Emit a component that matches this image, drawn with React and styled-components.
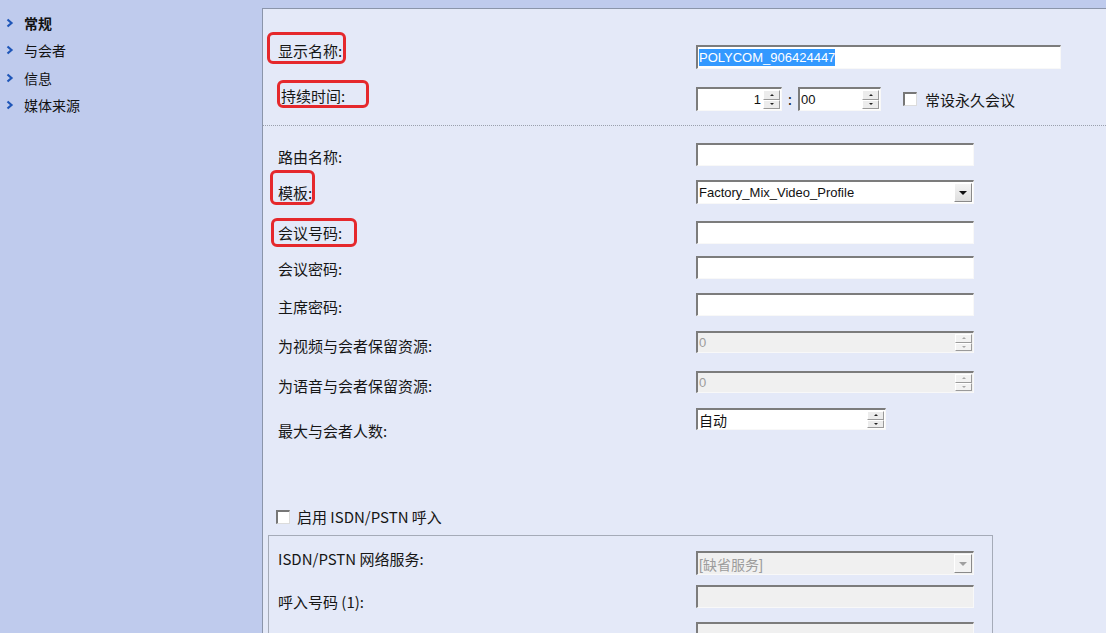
import React from 'react';
import styled, { createGlobalStyle } from 'styled-components';

const GlobalStyle = createGlobalStyle`
  html, body {
    margin: 0;
    padding: 0;
  }
  body {
    background: #bfcbed;
    font-family: "Noto Sans CJK SC", "Liberation Sans", sans-serif;
    color: #161616;
    overflow: hidden;
  }
`;

const Page = styled.div`
  display: flex;
  width: 1106px;
  height: 633px;
  overflow: hidden;
`;

const Sidebar = styled.ul`
  width: 262px;
  flex-shrink: 0;
  margin: 0;
  padding: 9px 0 0 0;
  list-style: none;
`;

const NavItem = styled.li`
  display: flex;
  align-items: center;
  height: 27.5px;
  padding-left: 6px;
  font-size: 14px;
  font-weight: ${p => (p.$active ? 700 : 400)};
  color: #111;
`;

const Chevron = styled.svg`
  width: 8px;
  height: 10px;
  margin-right: 10px;
  flex-shrink: 0;
`;

const Panel = styled.main`
  flex: 1;
  margin-top: 8px;
  background: #e4e9f8;
  border-left: 1px solid #8b95aa;
  border-top: 1px solid #8b95aa;
  display: flex;
  flex-direction: column;
  overflow: hidden;
`;

const TopSection = styled.section`
  display: flex;
  flex-direction: column;
  gap: 18px;
  padding: 36px 0 14px 15px;
  border-bottom: 1px dotted #9aa0ad;
`;

const Form = styled.section`
  display: flex;
  flex-direction: column;
  padding: 17px 0 0 15px;
`;

const Row = styled.div`
  display: grid;
  grid-template-columns: 418px auto;
  align-items: start;
  height: ${p => p.$h || 24}px;
`;

const Label = styled.div`
  font-size: 15px;
  line-height: 24px;
  white-space: nowrap;
  margin-top: ${p => p.$dy || 0}px;
  padding-left: ${p => p.$dx || 0}px;
`;

const Marked = styled.span`
  position: relative;
  display: inline-block;

  &::before {
    content: '';
    position: absolute;
    left: ${p => p.$box[0]}px;
    top: ${p => p.$box[1]}px;
    right: ${p => p.$box[2]}px;
    bottom: ${p => p.$box[3]}px;
    border: 3px solid #e5282c;
    border-radius: 6px;
  }
`;

const Controls = styled.div`
  display: flex;
  align-items: center;
`;

const Field = styled.div`
  box-sizing: border-box;
  display: flex;
  align-items: stretch;
  width: ${p => p.$w}px;
  height: ${p => p.$h || 23}px;
  background: ${p => (p.$disabled ? '#f0f0f0' : '#fff')};
  border-top: 2px solid #7c7c7c;
  border-left: 2px solid #7c7c7c;
  border-right: 1px solid #f8f8f8;
  border-bottom: 1px solid #f8f8f8;
  font-family: "Liberation Sans", "Noto Sans CJK SC", sans-serif;
  font-size: 13px;
  color: ${p => (p.$disabled ? '#9c9c9c' : '#111')};
`;

const FieldText = styled.span`
  flex: 1;
  display: flex;
  align-items: center;
  justify-content: ${p => (p.$right ? 'flex-end' : 'flex-start')};
  padding: 0 2px 0 1px;
  white-space: nowrap;
  overflow: hidden;
  font-size: ${p => (p.$cjk ? 14 : 13)}px;
`;

const Selected = styled.span`
  background: #3399ff;
  color: #fff;
  padding: 1px 0;
`;

const SpinBox = styled.div`
  display: flex;
  flex-direction: column;
  width: 17px;
  padding: 1px 1px 1px 0;
`;

const SpinButton = styled.div`
  flex: 1;
  display: flex;
  align-items: center;
  justify-content: center;
  background: ${p => (p.$disabled ? '#f2f2f2' : '#ececec')};
  border-top: 1px solid #fff;
  border-left: 1px solid #fff;
  border-right: 1px solid #9a9a9a;
  border-bottom: 1px solid #9a9a9a;

  &::after {
    content: '';
    border-left: 2px solid transparent;
    border-right: 2px solid transparent;
    ${p => (p.$up ? 'border-bottom' : 'border-top')}: 2px solid ${p => (p.$disabled ? '#a8a8a8' : '#222')};
  }
`;

const DropButton = styled.div`
  box-sizing: border-box;
  width: 18px;
  margin: 1px 1px 1px 0;
  display: flex;
  align-items: center;
  justify-content: center;
  background: ${p => (p.$disabled ? '#f2f2f2' : 'linear-gradient(#f4f4f4, #dedede)')};
  border-top: 1px solid #fff;
  border-left: 1px solid #fff;
  border-right: 1px solid #8a8a8a;
  border-bottom: 1px solid #8a8a8a;

  &::after {
    content: '';
    border-left: 4px solid transparent;
    border-right: 4px solid transparent;
    border-top: 4px solid ${p => (p.$disabled ? '#a0a0a0' : '#111')};
  }
`;

const Colon = styled.span`
  width: 16px;
  text-align: center;
  font-size: 14px;
`;

const Check = styled.span`
  box-sizing: border-box;
  display: inline-block;
  width: 14px;
  height: 14px;
  flex-shrink: 0;
  background: #fff;
  border-top: 2px solid #777;
  border-left: 2px solid #777;
  border-right: 1px solid #dcdcdc;
  border-bottom: 1px solid #dcdcdc;
`;

const CheckLabel = styled.span`
  font-size: 15px;
  margin-left: ${p => p.$gap}px;
  white-space: nowrap;
`;

const CheckRow = styled.div`
  display: flex;
  align-items: center;
  height: 22px;
  padding-left: 13px;
  margin-bottom: 8px;
`;

const GroupBox = styled.fieldset`
  box-sizing: border-box;
  width: 725px;
  margin: 0 0 0 5px;
  padding: 15px 0 0 9px;
  border: 1px solid #a5abb8;
  border-bottom: none;
  min-height: 120px;
`;

const Spin = ({ w, h = 22, value, right, disabled, cjk }) => (
  <Field $w={w} $h={h} $disabled={disabled}>
    <FieldText $right={right} $cjk={cjk}>{value}</FieldText>
    <SpinBox>
      <SpinButton $up $disabled={disabled} />
      <SpinButton $disabled={disabled} />
    </SpinBox>
  </Field>
);

const Select = ({ value, disabled, cjk }) => (
  <Field $w={278} $h={24} $disabled={disabled}>
    <FieldText $cjk={cjk}>{value}</FieldText>
    <DropButton $disabled={disabled} />
  </Field>
);

const Arrow = () => (
  <Chevron viewBox="0 0 8 10">
    <path d="M1.5 1.5 L5.5 5 L1.5 8.5" fill="none" stroke="#1f56b8" strokeWidth="2.2" />
  </Chevron>
);

const navItems = ['常规', '与会者', '信息', '媒体来源'];

const formRows = [
  { label: '路由名称:', h: 37, dy: 2, control: <Field $w={278} /> },
  { label: '模板:', h: 41, dy: 1, mark: [-8, -11, -3, 0], control: <Select value="Factory_Mix_Video_Profile" /> },
  { label: '会议号码:', h: 35, dy: 0, mark: [-7, -3, -15, -2], control: <Field $w={278} /> },
  { label: '会议密码:', h: 37, dy: 1, control: <Field $w={278} /> },
  { label: '主席密码:', h: 38, dy: 2, control: <Field $w={278} /> },
  { label: '为视频与会者保留资源:', h: 40, dy: 3, control: <Spin w={278} value="0" disabled /> },
  { label: '为语音与会者保留资源:', h: 37, dy: 3, control: <Spin w={278} value="0" disabled /> },
  { label: '最大与会者人数:', h: 98, dy: 11, control: <Spin w={190} value="自动" cjk /> },
];

const RowLabel = ({ text, mark, dy, dx }) => (
  <Label $dy={dy} $dx={dx}>
    {mark ? <Marked $box={mark}>{text}</Marked> : text}
  </Label>
);

export default function App() {
  return (
    <Page>
      <GlobalStyle />
      <Sidebar>
        {navItems.map((item, i) => (
          <NavItem key={item} $active={i === 0}>
            <Arrow />
            {item}
          </NavItem>
        ))}
      </Sidebar>

      <Panel>
        <TopSection>
          <Row>
            <RowLabel text="显示名称:" dy={-6} mark={[-11, -7, -4, -1]} />
            <Controls>
              <Field $w={365} $h={24}>
                <FieldText>
                  <Selected>POLYCOM_906424447</Selected>
                </FieldText>
              </Field>
            </Controls>
          </Row>
          <Row>
            <RowLabel text="持续时间:" dy={-3} dx={3} mark={[-4, -4, -24, 0]} />
            <Controls>
              <Spin w={86} h={24} value="1" right />
              <Colon>:</Colon>
              <Spin w={83} h={24} value="00" />
              <Check style={{ marginLeft: 22 }} />
              <CheckLabel $gap={8}>常设永久会议</CheckLabel>
            </Controls>
          </Row>
        </TopSection>

        <Form>
          {formRows.map(r => (
            <Row key={r.label} $h={r.h}>
              <RowLabel text={r.label} dy={r.dy} mark={r.mark} />
              <Controls>{r.control}</Controls>
            </Row>
          ))}
        </Form>

        <CheckRow>
          <Check />
          <CheckLabel $gap={7}>启用 ISDN/PSTN 呼入</CheckLabel>
        </CheckRow>

        <GroupBox>
          <Row $h={34}>
            <RowLabel text="ISDN/PSTN 网络服务:" dy={-4} />
            <Controls>
              <Select value="[缺省服务]" disabled cjk />
            </Controls>
          </Row>
          <Row $h={37}>
            <RowLabel text="呼入号码 (1):" dy={5} />
            <Controls>
              <Field $w={278} $disabled />
            </Controls>
          </Row>
          <Row $h={24}>
            <Label />
            <Controls>
              <Field $w={278} $disabled />
            </Controls>
          </Row>
        </GroupBox>
      </Panel>
    </Page>
  );
}
